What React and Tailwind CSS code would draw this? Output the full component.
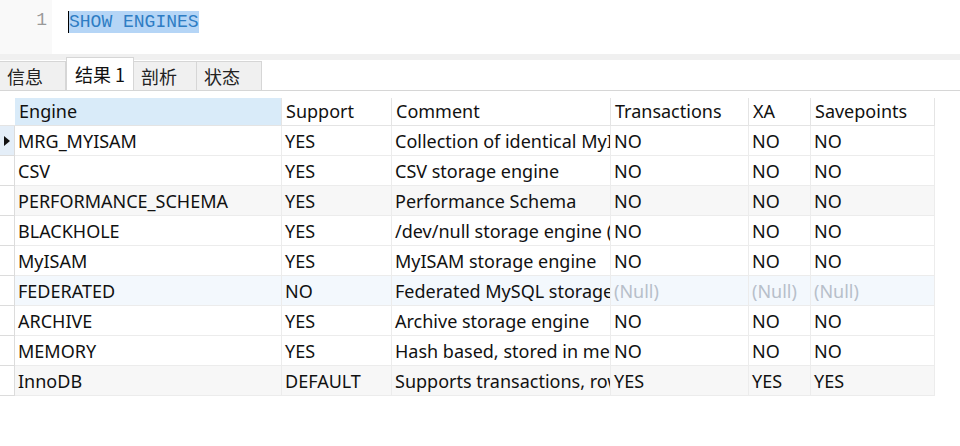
import React from 'react';

const cols = ['Engine', 'Support', 'Comment', 'Transactions', 'XA', 'Savepoints'];

const rows = [
  ['MRG_MYISAM', 'YES', 'Collection of identical MyISAM tables', 'NO', 'NO', 'NO'],
  ['CSV', 'YES', 'CSV storage engine', 'NO', 'NO', 'NO'],
  ['PERFORMANCE_SCHEMA', 'YES', 'Performance Schema', 'NO', 'NO', 'NO'],
  ['BLACKHOLE', 'YES', '/dev/null storage engine (anything you write to it disappears)', 'NO', 'NO', 'NO'],
  ['MyISAM', 'YES', 'MyISAM storage engine', 'NO', 'NO', 'NO'],
  ['FEDERATED', 'NO', 'Federated MySQL storage engine', null, null, null],
  ['ARCHIVE', 'YES', 'Archive storage engine', 'NO', 'NO', 'NO'],
  ['MEMORY', 'YES', 'Hash based, stored in memory, useful for temporary tables', 'NO', 'NO', 'NO'],
  ['InnoDB', 'DEFAULT', 'Supports transactions, row-level locking, and foreign keys', 'YES', 'YES', 'YES'],
];

const rowBg = (i) => {
  if (i === 5) return 'bg-[#f3f8fd]';
  if (i % 3 === 2) return 'bg-[#f7f7f7]';
  return 'bg-white';
};

const Tab = ({ label, width, active }) => (
  <div
    className={
      active
        ? `${width} h-[33px] -mt-[2px] pl-[8px] flex items-center bg-white border-x border-t border-[#d6d6d6] text-[18px] text-[#111]`
        : `${width} h-[29px] pl-[7px] flex items-center bg-[#f0f0f0] border-r border-t border-[#d6d6d6] text-[18px] text-[#222]`
    }
  >
    {label}
  </div>
);

export default function App() {
  return (
    <div className="w-[960px] h-[446px] bg-white overflow-hidden" style={{ fontFamily: '"Noto Sans", "Noto Sans CJK SC", sans-serif' }}>
      {/* Editor */}
      <div className="h-[54px] flex bg-white">
        <div className="w-[52px] bg-[#f9f9f9] flex justify-end pr-[5px] pt-[8px] text-[18px] text-[#999] leading-[24px]" style={{ fontFamily: '"Liberation Mono", monospace' }}>
          1
        </div>
        <div className="pl-[16px] pt-[9px]">
          <span className="border-l border-black bg-[#b5d5f6] text-[#2e7dc4] text-[18px] leading-[22px] inline-block" style={{ fontFamily: '"Liberation Mono", monospace' }}>
            SHOW ENGINES
          </span>
        </div>
      </div>
      <div className="h-[6px] bg-[#f0f0f0]" />

      {/* Tabs */}
      <div className="h-[31px] flex items-end border-b border-[#d6d6d6] bg-white" style={{ fontFamily: '"Noto Sans CJK SC", sans-serif' }}>
        <div className="flex items-end h-[29px]">
          <Tab label="信息" width="w-[66px]" />
          <Tab label="结果 1" width="w-[68px]" active />
          <Tab label="剖析" width="w-[63px]" />
          <Tab label="状态" width="w-[65px]" />
        </div>
      </div>

      {/* Grid */}
      <div className="pt-[7px]">
        <div className="grid grid-cols-[15px_267px_110px_219px_138px_62px_124px] w-[935px] text-[18px] text-[#111]">
          <div className="h-[28px] border-b border-[#e4e4e4]" />
          {cols.map((c, i) => (
            <div
              key={c}
              className={`h-[28px] pl-[4px] flex items-center border-b border-r border-[#e4e4e4] whitespace-nowrap overflow-hidden ${i === 0 ? 'bg-[#d9ebf9]' : 'bg-white'}`}
            >
              {c}
            </div>
          ))}
          {rows.map((r, ri) => (
            <React.Fragment key={ri}>
              <div className={`h-[30px] flex items-center justify-center border-b border-r border-[#dcdcdc] ${ri === 0 ? 'bg-[#e4eef8]' : 'bg-white'}`}>
                {ri === 0 && (
                  <svg width="6" height="10" viewBox="0 0 6 10">
                    <path d="M0 0 L6 5 L0 10 Z" fill="#111" />
                  </svg>
                )}
              </div>
              {r.map((v, ci) => (
                <div
                  key={ci}
                  className={`h-[30px] pl-[3px] pt-[1px] flex items-center border-b border-r border-[#ececec] whitespace-nowrap overflow-hidden ${rowBg(ri)} ${v === null ? 'text-[#b7bfca]' : ''}`}
                >
                  {v === null ? '(Null)' : v}
                </div>
              ))}
            </React.Fragment>
          ))}
        </div>
      </div>
    </div>
  );
}
